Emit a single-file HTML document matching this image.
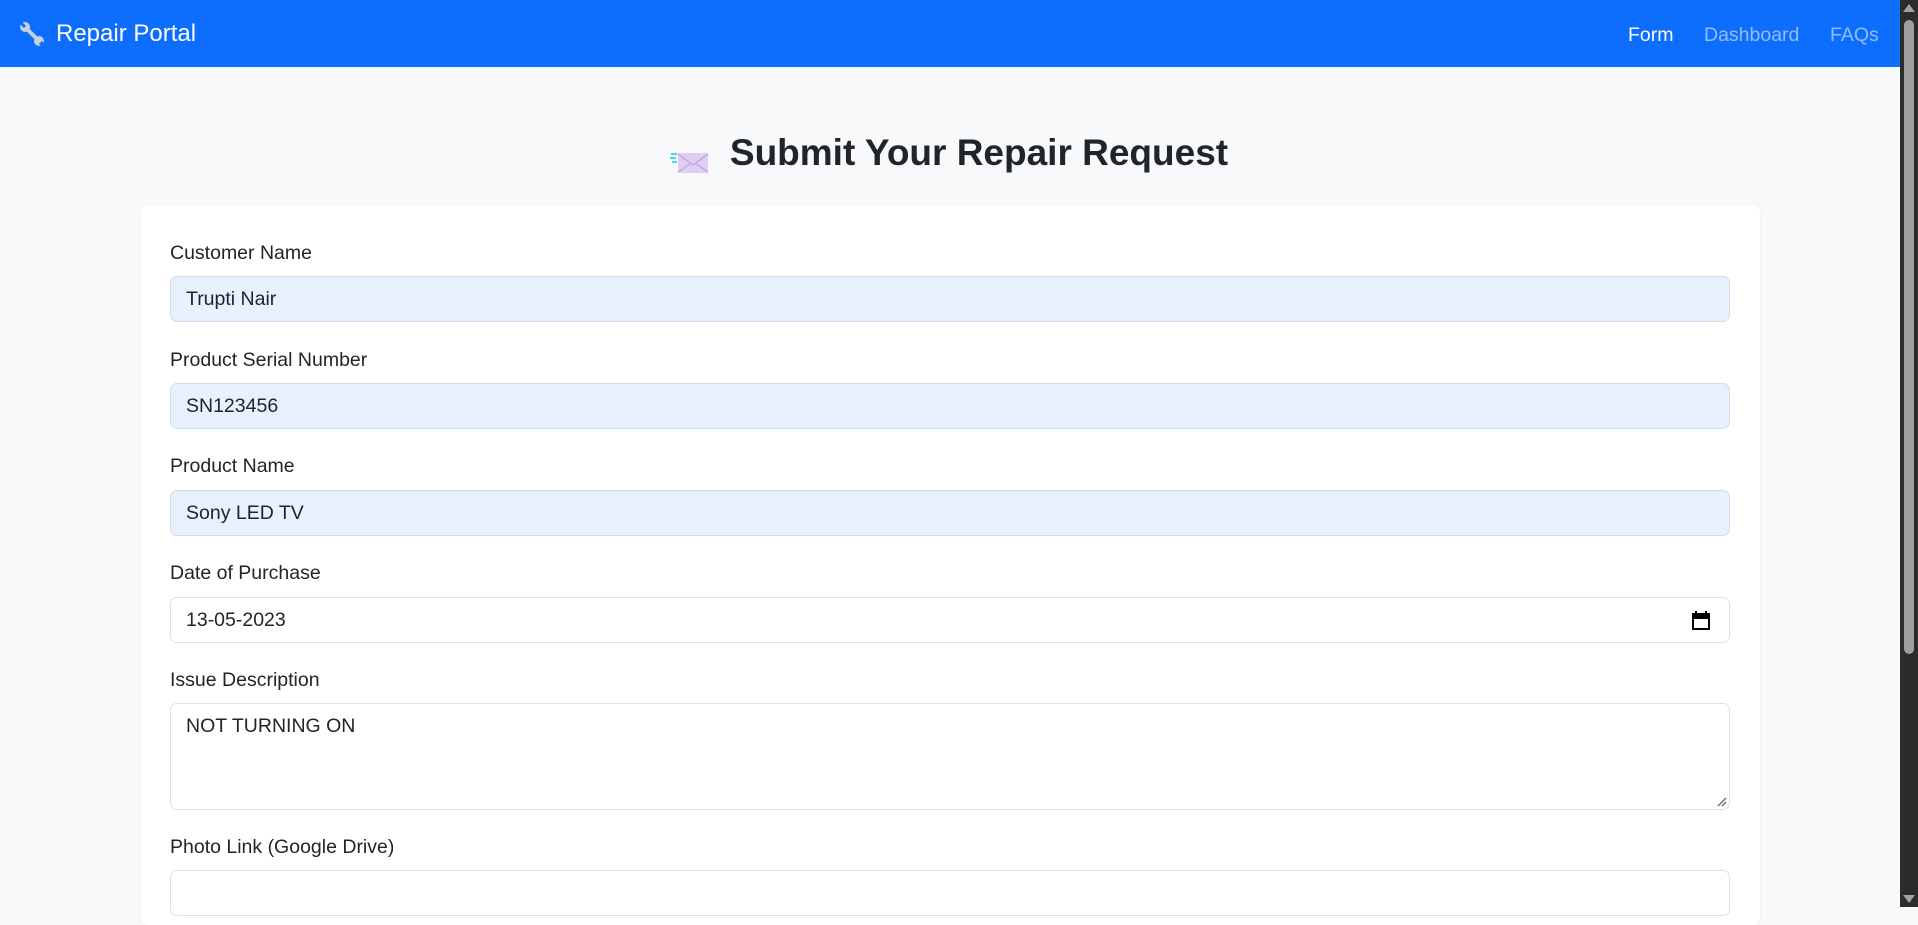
<!DOCTYPE html>
<html><head><meta charset="utf-8"><style>
*{box-sizing:border-box;margin:0;padding:0}
body{width:1918px;height:907px;overflow:hidden;background:#f8f9fa;font-family:"Segoe UI","Liberation Sans","DejaVu Sans",sans-serif;color:#212529;position:relative}
.nav{position:absolute;left:0;top:0;width:1900px;height:67px;background:#0d6efd}
.brand{position:absolute;left:56px;top:20px;font-size:24px;color:#fff}
.wr{position:absolute;left:19px;top:21px}
.nl{position:absolute;top:24px;font-size:19.5px;color:rgba(255,255,255,.55)}
h1{position:absolute;left:0;width:1900px;top:132px;text-align:center;font-size:37px;font-weight:600;padding-left:58px}
.env{position:absolute;left:670px;top:148px}
.card{position:absolute;left:141px;top:205px;width:1619px;height:720px;background:#fff;border-radius:7px;box-shadow:0 1px 3px rgba(0,0,0,.06)}
.lb{position:absolute;left:170px;font-size:19.5px}
.in{position:absolute;left:170px;width:1560px;height:46px;border:1px solid #dee2e6;border-radius:7px;background:#fff;font-size:19.5px;padding:9px 15px;line-height:26px}
.af{background:#e8f0fe;border-color:#d3dcea}
.sb{position:absolute;left:1900px;top:0;width:18px;height:907px;background:#2b2b2b}
.th{position:absolute;left:1904px;top:20px;width:10px;height:634px;background:#9f9f9f;border-radius:5px}
</style></head><body>
<div class="nav">
<svg class="wr" width="26" height="26" viewBox="0 0 26 26"><path d="M7 7L20 20" stroke="#c9cfe0" stroke-width="4" stroke-linecap="round"/><circle cx="6" cy="6" r="5" fill="#c9cfe0"/><circle cx="20" cy="20" r="5" fill="#c9cfe0"/><path d="M2 2l4 4M21 24l3-3" stroke="#0d6efd" stroke-width="3"/></svg>
<div class="brand">Repair Portal</div>
<div class="nl" style="left:1628px;color:#fff">Form</div>
<div class="nl" style="left:1704px">Dashboard</div>
<div class="nl" style="left:1830px">FAQs</div>
</div>
<svg class="env" width="40" height="30" viewBox="0 0 40 30"><path d="M1 6h6M0 10h6M2 14h5" stroke="#4fd3f5" stroke-width="2"/><rect x="8" y="5" width="30" height="20" rx="2" fill="#e2cdf2"/><path d="M8 6l15 11 15-11M8 24l12-8M38 24l-12-8" stroke="#c6a8e3" stroke-width="1.5" fill="none"/></svg>
<h1>Submit Your Repair Request</h1>
<div class="card"></div>
<div class="lb" style="top:242px">Customer Name</div>
<div class="in af" style="top:276px">Trupti Nair</div>
<div class="lb" style="top:349px">Product Serial Number</div>
<div class="in af" style="top:383px">SN123456</div>
<div class="lb" style="top:455px">Product Name</div>
<div class="in af" style="top:490px">Sony LED TV</div>
<div class="lb" style="top:562px">Date of Purchase</div>
<div class="in" style="top:597px">13-05-2023<svg style="position:absolute;right:19px;top:13px" width="18" height="19" viewBox="0 0 18 19"><path d="M1 3h16v15H1z" fill="none" stroke="#000" stroke-width="2"/><path d="M1 3h16v4H1zM4 0v4M14 0v4" fill="#000" stroke="#000" stroke-width="2"/></svg></div>
<div class="lb" style="top:669px">Issue Description</div>
<div class="in" style="top:703px;height:107px">NOT TURNING ON<svg style="position:absolute;right:2px;bottom:2px" width="10" height="10"><path d="M1 9L9 1M5 9L9 5" stroke="#666" stroke-width="1.3"/></svg></div>
<div class="lb" style="top:836px">Photo Link (Google Drive)</div>
<div class="in" style="top:870px"></div>
<div class="sb"></div><div class="th"></div>
<svg style="position:absolute;left:1903px;top:4px" width="12" height="8"><path d="M0 8L6 0 12 8z" fill="#a0a0a0"/></svg>
<svg style="position:absolute;left:1903px;top:895px" width="12" height="8"><path d="M0 0L6 8 12 0z" fill="#a0a0a0"/></svg>
</body></html>
